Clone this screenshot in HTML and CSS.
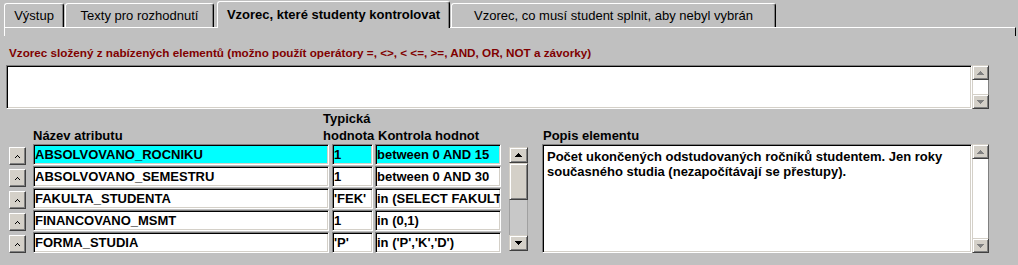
FILE: index.html
```html
<!DOCTYPE html>
<html lang="cs">
<head>
  <meta charset="UTF-8">
  <title>Vzorec, které studenty kontrolovat</title>
  <link rel="stylesheet" href="styles.css">
</head>
<body>
  <div class="tabs">
    <div class="tab tab-vystup">Výstup</div>
    <div class="tab tab-texty">Texty pro rozhodnutí</div>
    <div class="tab tab-vzorec active">Vzorec, které studenty kontrolovat</div>
    <div class="tab tab-splnit">Vzorec, co musí student splnit, aby nebyl vybrán</div>
  </div>
  <div class="tab-frame"></div>

  <div class="formula-label">Vzorec složený z nabízených elementů (možno použít operátory =, &lt;&gt;, &lt; &lt;=, &gt;=, AND, OR, NOT a závorky)</div>
  <div class="formula">
    <div class="field formula-text"></div>
    <div class="scrollbar">
      <div class="sb-btn"><svg width="7" height="4" viewBox="0 0 7 4"><path class="arr-dim" d="M3 0h1v1h1v1h1v1h1v1H0V3h1V2h1V1h1z"/></svg></div>
      <div class="sb-track"></div>
      <div class="sb-btn"><svg width="7" height="4" viewBox="0 0 7 4"><path class="arr-dim" d="M0 0h7v1H6v1H5v1H4v1H3V3H2V2H1V1H0z"/></svg></div>
    </div>
  </div>

  <div class="elements">
    <div class="attr-table">
      <div class="head-row">
        <div class="h-name">Název atributu</div>
        <div class="h-typ">Typická<br>hodnota</div>
        <div class="h-check">Kontrola hodnot</div>
      </div>

      <div class="row current">
        <div class="up-btn"><svg width="5" height="3" viewBox="0 0 5 3"><path d="M2 0h1v1H2zM1 1h1v1H1zM3 1h1v1H3zM0 2h1v1H0zM4 2h1v1H4z"/></svg></div>
        <div class="field f-name">ABSOLVOVANO_ROCNIKU</div>
        <div class="field f-typ">1</div>
        <div class="field f-check">between 0 AND 15</div>
      </div>
      <div class="row">
        <div class="up-btn"><svg width="5" height="3" viewBox="0 0 5 3"><path d="M2 0h1v1H2zM1 1h1v1H1zM3 1h1v1H3zM0 2h1v1H0zM4 2h1v1H4z"/></svg></div>
        <div class="field f-name">ABSOLVOVANO_SEMESTRU</div>
        <div class="field f-typ">1</div>
        <div class="field f-check">between 0 AND 30</div>
      </div>
      <div class="row">
        <div class="up-btn"><svg width="5" height="3" viewBox="0 0 5 3"><path d="M2 0h1v1H2zM1 1h1v1H1zM3 1h1v1H3zM0 2h1v1H0zM4 2h1v1H4z"/></svg></div>
        <div class="field f-name">FAKULTA_STUDENTA</div>
        <div class="field f-typ">'FEK'</div>
        <div class="field f-check">in (SELECT FAKULTA FROM FAKULTY)</div>
      </div>
      <div class="row">
        <div class="up-btn"><svg width="5" height="3" viewBox="0 0 5 3"><path d="M2 0h1v1H2zM1 1h1v1H1zM3 1h1v1H3zM0 2h1v1H0zM4 2h1v1H4z"/></svg></div>
        <div class="field f-name">FINANCOVANO_MSMT</div>
        <div class="field f-typ">1</div>
        <div class="field f-check">in (0,1)</div>
      </div>
      <div class="row">
        <div class="up-btn"><svg width="5" height="3" viewBox="0 0 5 3"><path d="M2 0h1v1H2zM1 1h1v1H1zM3 1h1v1H3zM0 2h1v1H0zM4 2h1v1H4z"/></svg></div>
        <div class="field f-name">FORMA_STUDIA</div>
        <div class="field f-typ">'P'</div>
        <div class="field f-check">in ('P','K','D')</div>
      </div>
    </div>

    <div class="scrollbar mid">
      <div class="sb-btn"><svg width="7" height="4" viewBox="0 0 7 4"><path d="M3 0h1v1h1v1h1v1h1v1H0V3h1V2h1V1h1z"/></svg></div>
      <div class="sb-thumb"></div>
      <div class="sb-track"></div>
      <div class="sb-btn"><svg width="7" height="4" viewBox="0 0 7 4"><path d="M0 0h7v1H6v1H5v1H4v1H3V3H2V2H1V1H0z"/></svg></div>
    </div>

    <div class="desc">
      <div class="h-desc">Popis elementu</div>
      <div class="desc-box">
        <div class="field desc-text">Počet ukončených odstudovaných ročníků studentem. Jen roky současného studia (nezapočítávají se přestupy).</div>
        <div class="scrollbar">
          <div class="sb-btn"><svg width="7" height="4" viewBox="0 0 7 4"><path class="arr-dim" d="M3 0h1v1h1v1h1v1h1v1H0V3h1V2h1V1h1z"/></svg></div>
          <div class="sb-track"></div>
          <div class="sb-btn"><svg width="7" height="4" viewBox="0 0 7 4"><path class="arr-dim" d="M0 0h7v1H6v1H5v1H4v1H3V3H2V2H1V1H0z"/></svg></div>
        </div>
      </div>
    </div>
  </div>
</body>
</html>
```

FILE: styles.css
```css
body {
  margin: 0;
  background: #c0c0c0;
  font-family: "Liberation Sans", Arial, sans-serif;
  font-size: 13px;
  color: #000;
}

/* tabs */
.tabs {
  display: flex;
  align-items: flex-end;
  height: 27px;
  padding-left: 4px;
}

.tab {
  box-sizing: border-box;
  height: 24px;
  line-height: 23px;
  text-align: center;
  white-space: nowrap;
  border-top: 1px solid #fff;
  border-left: 1px solid #fff;
  border-right: 1px solid #000;
  border-radius: 3px 3px 0 0;
  box-shadow: inset -1px 0 #808080;
  background: #c0c0c0;
}

.tab.active {
  height: 27px;
  margin-bottom: -1px;
  padding-top: 1px;
  line-height: 24px;
  font-weight: bold;
  position: relative;
  z-index: 1;
}

.tab-vystup { width: 60px; }
.tab-texty { width: 149px; margin-left: 1px; }
.tab-vzorec { width: 233px; margin-left: 3px; }
.tab-splnit { width: 325px; margin-left: 1px; }

.tab-frame {
  height: 8px;
  margin: 0 2px 0 4px;
  border-top: 1px solid #fff;
  border-left: 1px solid #fff;
  border-right: 1px solid #000;
}

/* formula */
.formula-label {
  margin: 10px 0 0 9px;
  font-size: 11.7px;
  font-weight: bold;
  line-height: 14px;
  color: #800000;
  white-space: nowrap;
}

.formula {
  display: flex;
  height: 44px;
  margin: 5px 0 0 6px;
}

.field {
  box-sizing: border-box;
  background: #fff;
  border: 1px solid;
  border-color: #808080 #fff #fff #808080;
  box-shadow: inset 1px 1px #000, inset -1px -1px #d4d0c8;
  overflow: hidden;
  white-space: nowrap;
}

.formula-text {
  width: 966px;
}

/* scrollbars */
.scrollbar {
  display: flex;
  flex-direction: column;
  width: 17px;
  box-sizing: border-box;
}

.sb-btn {
  flex: none;
  height: 15px;
  box-sizing: border-box;
  display: flex;
  align-items: center;
  justify-content: center;
  background: #d4d0c8;
  border: 1px solid;
  border-color: #d4d0c8 #404040 #404040 #d4d0c8;
  box-shadow: inset 1px 1px #fff, inset -1px -1px #808080;
}

.sb-btn svg {
  display: block;
}

.arr-dim {
  fill: #808080;
}

.sb-track {
  flex: 1;
  background: #fff;
  border-left: 1px solid #d4d0c8;
  border-right: 1px solid #808080;
}

.scrollbar.mid {
  width: 19px;
  height: 104px;
  margin: 37px 0 0 8px;
  align-self: flex-start;
}

.scrollbar.mid .sb-btn {
  height: 16px;
}

.scrollbar.mid .sb-track {
  background: #c8c8c8;
  border-left: 1px solid #a0a0a0;
  border-right: 1px solid #a0a0a0;
}

.sb-thumb {
  flex: none;
  height: 37px;
  box-sizing: border-box;
  background: #d4d0c8;
  border: 1px solid;
  border-color: #d4d0c8 #404040 #404040 #d4d0c8;
  box-shadow: inset 1px 1px #fff, inset -1px -1px #808080;
}

/* attribute table */
.elements {
  display: flex;
  padding: 1px 0 0 9px;
}

.attr-table {
  width: 492px;
}

.head-row {
  display: flex;
  align-items: flex-end;
  height: 34px;
  line-height: 17px;
  font-weight: bold;
  white-space: nowrap;
}

.h-name { margin-left: 24px; width: 290px; }
.h-typ { width: 55px; }

.row {
  display: flex;
  height: 21px;
  margin-bottom: 1px;
}

.up-btn {
  flex: none;
  box-sizing: border-box;
  width: 17px;
  height: 18px;
  margin: 3px 7px 0 0;
  display: flex;
  align-items: center;
  justify-content: center;
  background: #d4d0c8;
  border: 1px solid;
  border-color: #fff #404040 #404040 #fff;
  box-shadow: inset -1px -1px #808080;
}

.up-btn svg {
  display: block;
}

.row .field {
  height: 21px;
  line-height: 19px;
  padding-left: 1px;
  font-weight: bold;
}

.row.current .field {
  background: #00ffff;
}

.f-name { width: 296px; margin-right: 3px; }
.f-typ { width: 41px; margin-right: 2px; }
.f-check { width: 126px; }

/* description */
.desc {
  margin-left: 14px;
}

.h-desc {
  padding: 17px 0 0 1px;
  line-height: 17px;
  font-weight: bold;
}

.desc-box {
  display: flex;
  height: 109px;
}

.desc-text {
  width: 430px;
  padding: 4px 4px 0;
  line-height: 15px;
  font-weight: bold;
  white-space: normal;
}
```
